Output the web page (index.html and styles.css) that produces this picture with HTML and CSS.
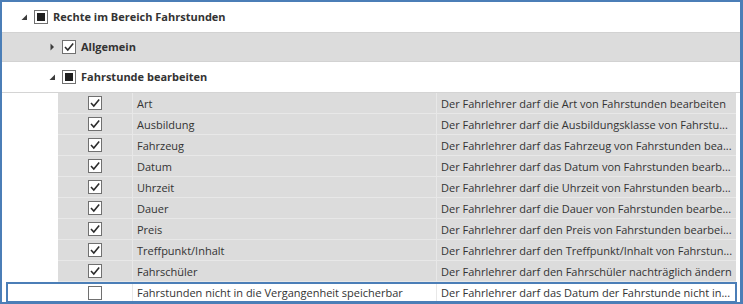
FILE: index.html
```html
<!DOCTYPE html>
<html lang="de">
<head>
  <meta charset="UTF-8">
  <title>Rechte</title>
  <link rel="stylesheet" href="styles.css">
</head>
<body>

<div class="tree">
  <div class="node level-0">
    <span class="expander"><svg width="7" height="7" viewBox="0 0 7 7"><path d="M6 0.5 L6 6 L0.5 6 Z"/></svg></span>
    <span class="box partial"></span>
    <span class="label">Rechte im Bereich Fahrstunden</span>
  </div>
  <div class="node level-1 shaded">
    <span class="expander"><svg width="7" height="8" viewBox="0 0 7 8"><path d="M1.5 0.5 L5 4 L1.5 7.5 Z"/></svg></span>
    <span class="box"><svg width="12" height="12" viewBox="0 0 12 12"><path class="tick" d="M2 6 L4.8 9 L10.2 2.6"/></svg></span>
    <span class="label">Allgemein</span>
  </div>
  <div class="node level-1">
    <span class="expander"><svg width="7" height="7" viewBox="0 0 7 7"><path d="M6 0.5 L6 6 L0.5 6 Z"/></svg></span>
    <span class="box partial"></span>
    <span class="label">Fahrstunde bearbeiten</span>
  </div>

  <div class="grid">
    <div class="row">
      <span class="cell check"><span class="box"><svg width="12" height="12" viewBox="0 0 12 12"><path class="tick" d="M2 6 L4.8 9 L10.2 2.6"/></svg></span></span>
      <span class="cell name">Art</span>
      <span class="cell desc">Der Fahrlehrer darf die Art von Fahrstunden bearbeiten</span>
    </div>
    <div class="row">
      <span class="cell check"><span class="box"><svg width="12" height="12" viewBox="0 0 12 12"><path class="tick" d="M2 6 L4.8 9 L10.2 2.6"/></svg></span></span>
      <span class="cell name">Ausbildung</span>
      <span class="cell desc">Der Fahrlehrer darf die Ausbildungsklasse von Fahrstu...</span>
    </div>
    <div class="row">
      <span class="cell check"><span class="box"><svg width="12" height="12" viewBox="0 0 12 12"><path class="tick" d="M2 6 L4.8 9 L10.2 2.6"/></svg></span></span>
      <span class="cell name">Fahrzeug</span>
      <span class="cell desc">Der Fahrlehrer darf das Fahrzeug von Fahrstunden bea...</span>
    </div>
    <div class="row">
      <span class="cell check"><span class="box"><svg width="12" height="12" viewBox="0 0 12 12"><path class="tick" d="M2 6 L4.8 9 L10.2 2.6"/></svg></span></span>
      <span class="cell name">Datum</span>
      <span class="cell desc">Der Fahrlehrer darf das Datum von Fahrstunden bearb...</span>
    </div>
    <div class="row">
      <span class="cell check"><span class="box"><svg width="12" height="12" viewBox="0 0 12 12"><path class="tick" d="M2 6 L4.8 9 L10.2 2.6"/></svg></span></span>
      <span class="cell name">Uhrzeit</span>
      <span class="cell desc">Der Fahrlehrer darf die Uhrzeit von Fahrstunden bearb...</span>
    </div>
    <div class="row">
      <span class="cell check"><span class="box"><svg width="12" height="12" viewBox="0 0 12 12"><path class="tick" d="M2 6 L4.8 9 L10.2 2.6"/></svg></span></span>
      <span class="cell name">Dauer</span>
      <span class="cell desc">Der Fahrlehrer darf die Dauer von Fahrstunden bearbe...</span>
    </div>
    <div class="row">
      <span class="cell check"><span class="box"><svg width="12" height="12" viewBox="0 0 12 12"><path class="tick" d="M2 6 L4.8 9 L10.2 2.6"/></svg></span></span>
      <span class="cell name">Preis</span>
      <span class="cell desc">Der Fahrlehrer darf den Preis von Fahrstunden bearbei...</span>
    </div>
    <div class="row">
      <span class="cell check"><span class="box"><svg width="12" height="12" viewBox="0 0 12 12"><path class="tick" d="M2 6 L4.8 9 L10.2 2.6"/></svg></span></span>
      <span class="cell name">Treffpunkt/Inhalt</span>
      <span class="cell desc">Der Fahrlehrer darf den Treffpunkt/Inhalt von Fahrstun...</span>
    </div>
    <div class="row">
      <span class="cell check"><span class="box"><svg width="12" height="12" viewBox="0 0 12 12"><path class="tick" d="M2 6 L4.8 9 L10.2 2.6"/></svg></span></span>
      <span class="cell name">Fahrschüler</span>
      <span class="cell desc">Der Fahrlehrer darf den Fahrschüler nachträglich ändern</span>
    </div>
    <div class="row selected">
      <span class="cell check"><span class="box"></span></span>
      <span class="cell name">Fahrstunden nicht in die Vergangenheit speicherbar</span>
      <span class="cell desc">Der Fahrlehrer darf das Datum der Fahrstunde nicht in...</span>
    </div>
  </div>
</div>

</body>
</html>
```

FILE: styles.css
```css
body {
  margin: 0;
  font-family: "Open Sans", "Noto Sans", sans-serif;
  font-size: 11px;
  color: #333;
}

.tree {
  width: 743px;
  height: 304px;
  box-sizing: border-box;
  border: 2px solid #4b7eb7;
  border-right-width: 3px;
  background: #fff;
  overflow: hidden;
}

/* tree nodes */
.node {
  height: 30px;
  box-sizing: border-box;
  display: flex;
  align-items: center;
  font-weight: bold;
}

.level-0 {
  padding-left: 19px;
}

.level-1 {
  padding-left: 47px;
}

.shaded {
  background: #dcdcdc;
  border-top: 1px solid #d2d2d2;
  border-bottom: 1px solid #d2d2d2;
}

.expander {
  width: 13px;
  display: flex;
  align-items: center;
}

.expander svg {
  fill: #3c3c3c;
}

.label {
  margin-left: 5px;
  padding-bottom: 1px;
}

/* check boxes */
.box {
  width: 14px;
  height: 14px;
  box-sizing: border-box;
  border: 1px solid #707070;
  background: #fff;
  display: flex;
  align-items: center;
  justify-content: center;
}

.box.partial::after {
  content: "";
  width: 8px;
  height: 8px;
  background: #1f1f1f;
}

.tick {
  fill: none;
  stroke: #2b2b2b;
  stroke-width: 1.6;
}

/* rights grid */
.grid {
  border-top: 1px solid #d4d4d4;
}

.row {
  display: grid;
  grid-template-columns: 74px 304px 1fr;
  height: 21px;
  margin-left: 56px;
  margin-right: 4px;
  box-sizing: border-box;
  background: #dcdcdc;
  border-bottom: 1px solid #e8e8e8;
}

.cell {
  display: flex;
  align-items: center;
  white-space: nowrap;
  overflow: hidden;
}

.check {
  justify-content: center;
}

.name,
.desc {
  border-left: 1px solid #e8e8e8;
  padding-left: 4px;
}

.row.selected {
  height: 21px;
  margin-left: 4px;
  margin-right: 3px;
  padding-left: 50px;
  border: 2px solid #4b7eb7;
  background: #fff;
}
```
